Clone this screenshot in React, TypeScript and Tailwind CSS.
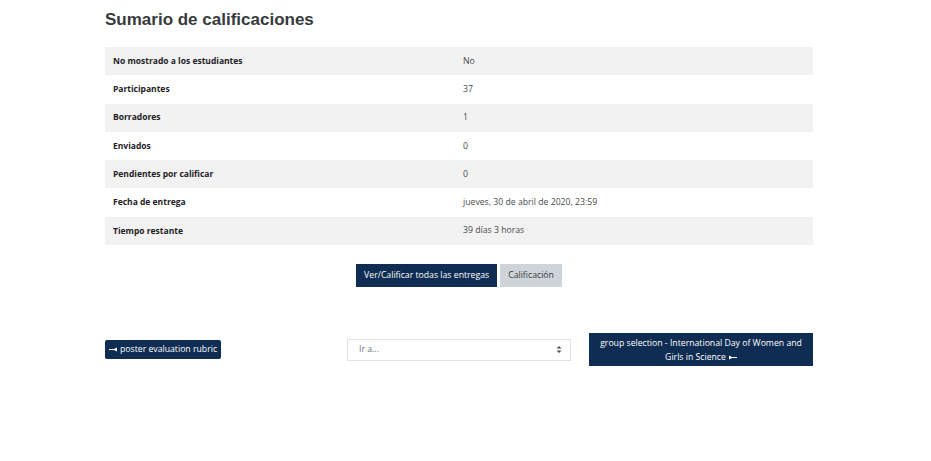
const rows: [string, string][] = [
  ['No mostrado a los estudiantes', 'No'],
  ['Participantes', '37'],
  ['Borradores', '1'],
  ['Enviados', '0'],
  ['Pendientes por calificar', '0'],
  ['Fecha de entrega', 'jueves, 30 de abril de 2020, 23:59'],
  ['Tiempo restante', '39 días 3 horas'],
]

function PrevArrow() {
  return (
    <svg width="8" height="5" viewBox="0 0 8 5" fill="white" className="inline-block mr-[3px] align-middle">
      <rect x="0" y="2" width="5" height="1" />
      <path d="M4 2.5 L8 0.5 V4.5 Z" />
    </svg>
  )
}

function NextArrow() {
  return (
    <svg width="8" height="5" viewBox="0 0 8 5" fill="white" className="inline-block ml-[3px] align-middle">
      <path d="M0 0.5 V4.5 L4 2.5 Z" />
      <rect x="3" y="2" width="5" height="1" />
    </svg>
  )
}

export default function App() {
  return (
    <div className="min-h-screen bg-white pl-[105px] pr-[118px] pt-[8px] text-[#373a3c] [font-family:'Open_Sans',sans-serif] w-[931px]">
      {/* Heading */}
      <h2 className="text-[17px] font-bold leading-[20px] text-[#373a3c] [font-family:'Liberation_Sans',Arial,sans-serif] mb-[17px] mt-[2px]">
        Sumario de calificaciones
      </h2>

      {/* Summary table */}
      <div className="flex flex-col text-[8.7px]">
        {rows.map(([label, value], i) => (
          <div
            key={label}
            className={`flex h-[28.3px] items-center ${i % 2 === 0 ? 'bg-[#f2f2f2]' : 'bg-white'}`}
          >
            <div className="w-[358px] pl-[8px] font-bold text-[8.5px] text-[#1d2125]">{label}</div>
            <div className="flex-1 text-[#4a4a4a]">{value}</div>
          </div>
        ))}
      </div>

      {/* Action buttons */}
      <div className="flex justify-center gap-[3px] mt-[19px] text-[8.7px]">
        <button className="h-[23px] px-[8px] bg-[#0f2d52] text-white">Ver/Calificar todas las entregas</button>
        <button className="h-[23px] px-[8px] bg-[#ced4da] text-[#373a3c]">Calificación</button>
      </div>

      {/* Navigation */}
      <div className="grid grid-cols-3 items-center mt-[46px] text-[8.7px]">
        <div>
          <button className="h-[19px] px-[4px] bg-[#0f2d52] text-white rounded-[2px]">
            <PrevArrow />poster evaluation rubric
          </button>
        </div>
        <div className="px-[6px]">
          <div className="h-[22px] border border-[#dee2e6] flex items-center justify-between pl-[11px] pr-[8px] text-[#6a737b]">
            <span>Ir a...</span>
            <svg width="6" height="9" viewBox="0 0 6 9" fill="#495057">
              <path d="M3 1 L5.5 3.5 H0.5 Z" />
              <path d="M3 8 L5.5 5.5 H0.5 Z" />
            </svg>
          </div>
        </div>
        <div className="flex justify-end">
          <button className="w-[224px] h-[33px] px-[4px] bg-[#0f2d52] text-white leading-[14px]">
            group selection - International Day of Women and Girls in Science<NextArrow />
          </button>
        </div>
      </div>
    </div>
  )
}
